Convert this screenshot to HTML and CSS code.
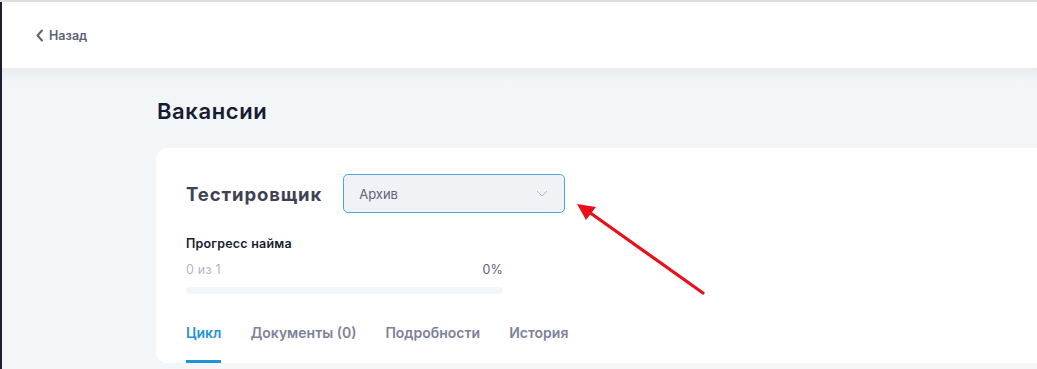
FILE: index.html
```html
<!DOCTYPE html>
<html lang="ru">
<head>
<meta charset="utf-8">
<link rel="stylesheet" href="styles.css">
</head>
<body>
<div class="app">
  <div class="side"></div>
  <div class="main">
    <header class="header">
      <a class="back" href="#">
        <svg width="9" height="13" viewBox="0 0 9 13"><path d="M7 1.5 L2.5 6.5 L7 11.5" fill="none" stroke="#5e6278" stroke-width="2" stroke-linecap="round" stroke-linejoin="round"/></svg>
        <span>Назад</span>
      </a>
    </header>
    <div class="content">
      <h1 class="title">Вакансии</h1>
      <section class="card">
        <div class="card-head">
          <h2 class="vacancy">Тестировщик</h2>
          <div class="select">
            <span>Архив</span>
            <svg width="12" height="7" viewBox="0 0 12 7"><path d="M1 1 L6 6 L11 1" fill="none" stroke="#b5b5c3" stroke-width="1"/></svg>
          </div>
        </div>
        <div class="progress">
          <div class="progress-label">Прогресс найма</div>
          <div class="progress-row"><span>0 из 1</span><span class="pct">0%</span></div>
          <div class="bar"><div class="bar-fill" style="width:0%"></div></div>
        </div>
        <nav class="tabs">
          <a class="tab active" href="#">Цикл</a>
          <a class="tab" href="#">Документы (0)</a>
          <a class="tab" href="#">Подробности</a>
          <a class="tab" href="#">История</a>
        </nav>
      </section>
    </div>
  </div>
  <svg class="arrow" width="140" height="100" viewBox="0 0 140 100">
    <line x1="128" y1="92" x2="14" y2="11" stroke="#e8101a" stroke-width="3.2" stroke-linecap="round"/>
    <polygon points="2,3 21,6 11,19" fill="#e8101a"/>
  </svg>
</div>
</body>
</html>
```
FILE: styles.css
```css
* { box-sizing: border-box; }
html, body { margin: 0; padding: 0; }
body {
  font-family: Inter, "Noto Sans", sans-serif;
  background: #f3f6f9;
  width: 1037px;
  height: 369px;
  overflow: hidden;
}
.app {
  position: relative;
  display: flex;
  height: 369px;
  border-top: 2px solid #dedede;
}
.side {
  width: 2px;
  flex: none;
  background: #1e1e2d;
}
.main {
  flex: 1;
  display: flex;
  flex-direction: column;
  background: #f3f6f9;
}
.header {
  height: 66px;
  background: #fff;
  display: flex;
  align-items: center;
  padding-left: 33px;
  position: relative;
}
.header::after {
  content: "";
  position: absolute;
  left: 0; right: 0; top: 100%;
  height: 14px;
  background: linear-gradient(#e9ecef, rgba(243,246,249,0));
}
.back {
  display: flex;
  align-items: center;
  gap: 5px;
  text-decoration: none;
  color: #5e6278;
  font-size: 12.5px;
  font-weight: 600;
}
.content {
  padding: 29px 0 0 154px;
  flex: 1;
  display: flex;
  flex-direction: column;
}
.title {
  margin: 0 0 0 1px;
  font-size: 22px;
  font-weight: 600;
  color: #181c32;
  line-height: 28px;
  letter-spacing: 0.6px;
}
.card {
  margin-top: 23px;
  background: #fff;
  border-radius: 12px 0 0 12px;
  padding: 26px 0 0 30px;
  height: 215px;
}
.card-head {
  display: flex;
  align-items: center;
  gap: 21px;
}
.vacancy {
  margin: 0;
  font-size: 18.5px;
  font-weight: 700;
  color: #3f4254;
  letter-spacing: 0.9px;
}
.select {
  width: 222px;
  height: 39px;
  border: 1px solid #4ba6e0;
  border-radius: 5px;
  background: #f1f2f5;
  display: flex;
  align-items: center;
  justify-content: space-between;
  padding: 0 16px 0 15px;
  font-size: 13px;
  color: #5e6278;
}
.progress {
  margin-top: 23px;
  width: 317px;
}
.progress-label {
  font-size: 12.5px;
  font-weight: 600;
  color: #181c32;
  line-height: 16px;
  letter-spacing: 0.2px;
}
.progress-row {
  margin-top: 10px;
  display: flex;
  justify-content: space-between;
  font-size: 12.5px;
  color: #b5b5c3;
  line-height: 16px;
  letter-spacing: 0.2px;
}
.pct { color: #5e6278; }
.bar {
  margin-top: 9px;
  height: 7px;
  border-radius: 4px;
  background: #f3f6f9;
}
.bar-fill { height: 100%; background: #009ef7; border-radius: 4px; }
.tabs {
  margin-top: 29px;
  display: flex;
  gap: 29px;
}
.tab {
  font-size: 14px;
  font-weight: 600;
  color: #7e8299;
  text-decoration: none;
  padding-bottom: 17px;
  line-height: 20px;
  border-bottom: 3px solid transparent;
}
.tab.active {
  color: #1e94d6;
  border-bottom-color: #1e94d6;
}
.arrow {
  position: absolute;
  left: 575px;
  top: 199px;
}
```
